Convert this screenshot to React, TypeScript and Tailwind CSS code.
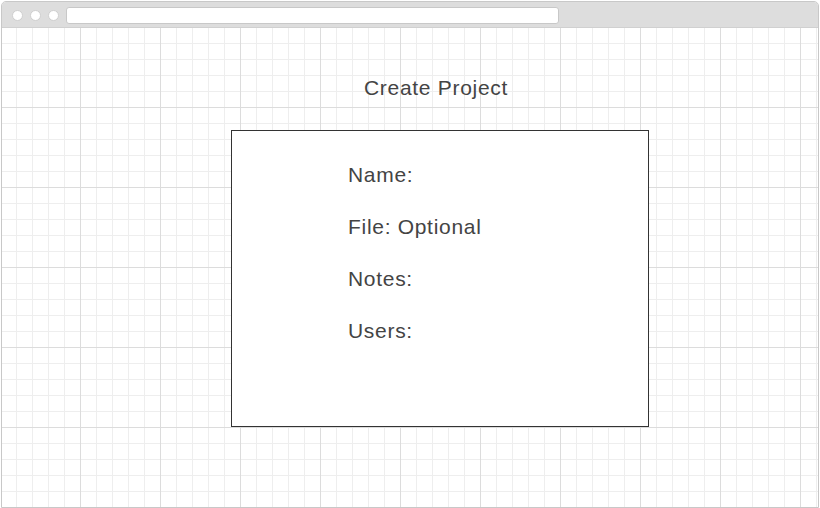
export default function App() {
  const fields = ['Name:', 'File: Optional', 'Notes:', 'Users:']

  return (
    <div className="w-[820px] h-[508px] bg-white pt-px pl-px pr-px overflow-hidden font-['Liberation_Sans',Arial,sans-serif]">
      <div className="h-[507px] flex flex-col border border-[#c8c8c8] rounded-t-[5px] overflow-hidden">
        {/* browser chrome */}
        <div className="h-[26px] shrink-0 bg-[#dddddd] border-b border-[#d0d0d0] flex items-center pl-[10px]">
          <div className="flex gap-[7px] mt-[2px]">
            <span className="w-[11px] h-[11px] rounded-full bg-white border border-[#cfcfcf]" />
            <span className="w-[11px] h-[11px] rounded-full bg-white border border-[#cfcfcf]" />
            <span className="w-[11px] h-[11px] rounded-full bg-white border border-[#cfcfcf]" />
          </div>
          <div className="ml-[7px] mt-[2px] w-[493px] h-[17px] bg-white border border-[#c8c8c8] rounded-[3px]" />
        </div>

        {/* canvas */}
        <div className="flex-1 flex flex-col items-start bg-white bg-[linear-gradient(to_right,#dcdcdc_1px,transparent_1px),linear-gradient(to_bottom,#dcdcdc_1px,transparent_1px),linear-gradient(to_right,#eeeeee_1px,transparent_1px),linear-gradient(to_bottom,#eeeeee_1px,transparent_1px)] bg-[size:80px_80px,80px_80px,16px_16px,16px_16px] bg-[position:-2px_-1px]">
          <h1 className="ml-[362px] mt-[48px] text-[21px] leading-[24px] tracking-[0.7px] text-[#444444]">
            Create Project
          </h1>
          <div className="ml-[229px] mt-[30px] w-[418px] h-[297px] bg-white border border-[#333333] pl-[116px] pt-[32px] flex flex-col gap-[28px]">
            {fields.map((f) => (
              <div key={f} className="text-[21px] leading-[24px] tracking-[0.7px] text-[#444444]">
                {f}
              </div>
            ))}
          </div>
        </div>
      </div>
    </div>
  )
}
